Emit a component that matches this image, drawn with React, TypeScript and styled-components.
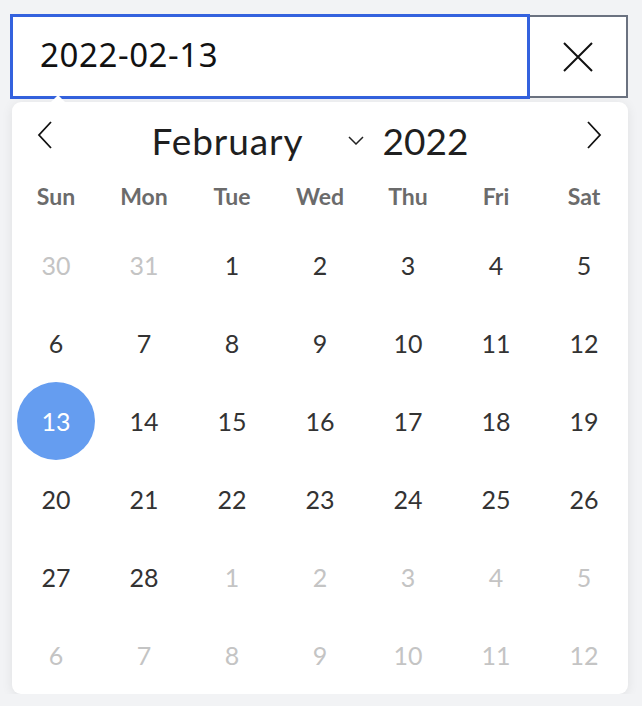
import React from "react";
import styled, { createGlobalStyle } from "styled-components";

const GlobalStyle = createGlobalStyle`
  html, body {
    margin: 0;
    padding: 0;
    background: #f2f3f5;
  }
  body {
    font-family: Lato, "Noto Sans", sans-serif;
  }
`;

const WEEKDAYS = ["Sun", "Mon", "Tue", "Wed", "Thu", "Fri", "Sat"];

type Day = { label: number; muted?: boolean; selected?: boolean };

const buildDays = (): Day[] => {
  const days: Day[] = [{ label: 30, muted: true }, { label: 31, muted: true }];
  for (let d = 1; d <= 28; d++) days.push({ label: d, selected: d === 13 });
  for (let d = 1; d <= 12; d++) days.push({ label: d, muted: true });
  return days;
};

const ChevronLeft = () => (
  <svg width="16" height="28" viewBox="0 0 16 28" fill="none">
    <path d="M14 1 L2 14 L14 27" stroke="#111" strokeWidth="1.8" />
  </svg>
);

const ChevronRight = () => (
  <svg width="16" height="28" viewBox="0 0 16 28" fill="none">
    <path d="M2 1 L14 14 L2 27" stroke="#111" strokeWidth="1.8" />
  </svg>
);

const CaretDown = () => (
  <svg width="16" height="9" viewBox="0 0 16 9" fill="none">
    <path d="M1 1 L8 8 L15 1" stroke="#222" strokeWidth="1.5" />
  </svg>
);

const CloseIcon = () => (
  <svg width="30" height="30" viewBox="0 0 30 30" fill="none">
    <path d="M1 1 L29 29 M29 1 L1 29" stroke="#111" strokeWidth="2" />
  </svg>
);

export default function App() {
  const days = buildDays();
  return (
    <>
      <GlobalStyle />
      <Page>
        <InputRow>
          <DateInput defaultValue="2022-02-13" />
          <ClearButton aria-label="Clear">
            <CloseIcon />
          </ClearButton>
        </InputRow>
        <Popover>
          <Header>
            <NavButton aria-label="Previous month">
              <ChevronLeft />
            </NavButton>
            <Title>
              <Month>February</Month>
              <CaretDown />
              <Year>2022</Year>
            </Title>
            <NavButton aria-label="Next month">
              <ChevronRight />
            </NavButton>
          </Header>
          <Weekdays>
            {WEEKDAYS.map((w) => (
              <Weekday key={w}>{w}</Weekday>
            ))}
          </Weekdays>
          <DaysGrid>
            {days.map((d, i) => (
              <DayCell key={i}>
                <DayNumber $muted={d.muted} $selected={d.selected}>
                  {d.label}
                </DayNumber>
              </DayCell>
            ))}
          </DaysGrid>
        </Popover>
      </Page>
    </>
  );
}

const Page = styled.div`
  padding: 14px 14px 0 10px;
  width: 618px;
`;

const InputRow = styled.div`
  display: flex;
  align-items: center;
  height: 85px;
`;

const DateInput = styled.input`
  box-sizing: border-box;
  width: 520px;
  height: 85px;
  border: 3px solid #3462de;
  background: #fff;
  padding: 0 0 4px 27px;
  font-family: "Noto Sans", sans-serif;
  font-size: 33px;
  letter-spacing: 0.6px;
  color: #111;
  outline: none;
`;

const ClearButton = styled.button`
  box-sizing: border-box;
  width: 98px;
  height: 83px;
  border: 2px solid #6b7280;
  border-left: none;
  background: #fff;
  display: flex;
  align-items: center;
  justify-content: center;
  padding: 0;
`;

const Popover = styled.div`
  position: relative;
  margin: 3px 0 0 2px;
  width: 616px;
  background: #fff;
  border-radius: 9px;
  box-shadow: 0 2px 12px rgba(0, 0, 0, 0.08);

  &::before {
    content: "";
    position: absolute;
    top: -7px;
    left: 39px;
    width: 0;
    height: 0;
    border-left: 7px solid transparent;
    border-right: 7px solid transparent;
    border-bottom: 7px solid #fff;
  }
`;

const Header = styled.div`
  display: flex;
  align-items: center;
  justify-content: space-between;
  height: 64px;
  padding: 2px 26px 0 25px;
  box-sizing: border-box;
`;

const NavButton = styled.button`
  border: none;
  background: none;
  padding: 0;
  display: flex;
  align-items: center;
`;

const Title = styled.div`
  display: flex;
  align-items: center;
  padding-top: 10px;
  margin-right: 19px;
  color: #1f1f1f;
  font-size: 37px;
`;

const Month = styled.span`
  width: 196px;
  letter-spacing: 0.9px;
`;

const Year = styled.span`
  margin-left: 19px;
`;

const Weekdays = styled.div`
  display: grid;
  grid-template-columns: repeat(7, 88px);
  height: 60px;
  align-items: center;
`;

const Weekday = styled.div`
  text-align: center;
  font-weight: 700;
  font-size: 23px;
  color: #6b6b6b;
`;

const DaysGrid = styled.div`
  display: grid;
  grid-template-columns: repeat(7, 88px);
  grid-auto-rows: 78px;
`;

const DayCell = styled.div`
  display: flex;
  align-items: center;
  justify-content: center;
`;

const DayNumber = styled.div<{ $muted?: boolean; $selected?: boolean }>`
  width: 78px;
  height: 78px;
  border-radius: 50%;
  display: flex;
  align-items: center;
  justify-content: center;
  font-size: 25px;
  color: ${(p) => (p.$selected ? "#fff" : p.$muted ? "#c4c4c4" : "#333")};
  background: ${(p) => (p.$selected ? "#659df0" : "transparent")};
`;
